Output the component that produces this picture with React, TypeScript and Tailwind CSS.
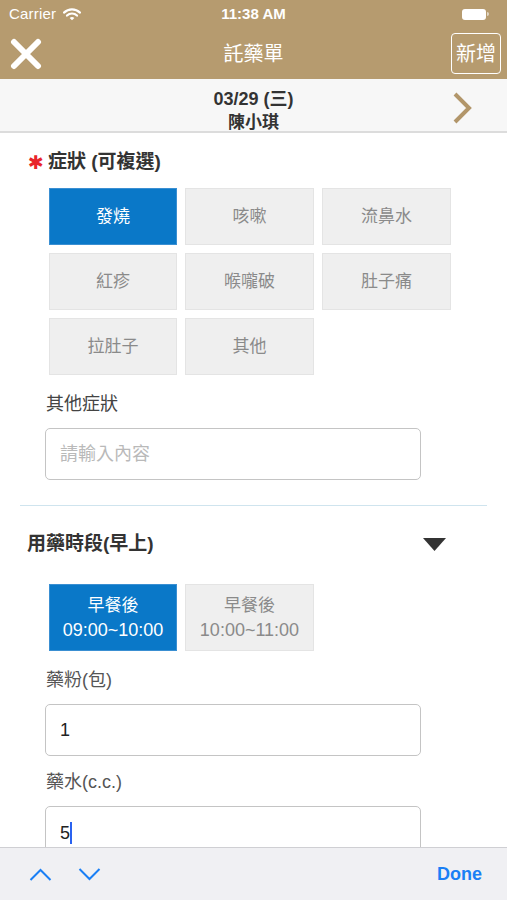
import { useState } from 'react'

const FONT = { fontFamily: '"Liberation Sans", "Noto Sans CJK TC", sans-serif' }

const SYMPTOMS = ['發燒', '咳嗽', '流鼻水', '紅疹', '喉嚨破', '肚子痛', '拉肚子', '其他']

const SLOTS = [
  { label: '早餐後', time: '09:00~10:00' },
  { label: '早餐後', time: '10:00~11:00' },
]

function StatusBar() {
  return (
    <div className="relative flex h-[28px] items-center px-[9px] text-[15px] text-white">
      <span className="tracking-[0.2px]">Carrier</span>
      <svg width="18" height="13" viewBox="0 0 18 13" className="ml-[7px]">
        <path d="M1 4.6 A11.5 11.5 0 0 1 17 4.6" stroke="white" strokeWidth="2.2" fill="none" strokeLinecap="round" />
        <path d="M4 7.6 A7 7 0 0 1 14 7.6" stroke="white" strokeWidth="2.2" fill="none" strokeLinecap="round" />
        <path d="M9 12.2 L6.6 10.1 A3.4 3.4 0 0 1 11.4 10.1 Z" fill="white" />
      </svg>
      <span className="absolute left-0 right-0 text-center font-semibold pointer-events-none">11:38 AM</span>
      <div className="ml-auto mr-[9px] flex items-center">
        <div className="h-[11px] w-[24px] rounded-[3px] bg-white" />
        <div className="ml-[1px] h-[4px] w-[2px] rounded-r-sm bg-white/60" />
      </div>
    </div>
  )
}

function NavBar() {
  return (
    <div className="relative flex h-[51px] items-center">
      <svg width="32" height="32" viewBox="0 0 32 32" className="ml-[10px]">
        <path d="M4 4 L28 28 M28 4 L4 28" stroke="white" strokeWidth="6" strokeLinecap="round" />
      </svg>
      <span className="absolute left-0 right-0 text-center text-[20px] text-white pointer-events-none">託藥單</span>
      <button className="ml-auto mr-[6px] flex h-[41px] w-[50px] items-center justify-center rounded-[4px] border border-white text-[20px] text-white">
        新增
      </button>
    </div>
  )
}

export default function App() {
  const [selected, setSelected] = useState<string[]>(['發燒'])
  const [slot, setSlot] = useState(0)

  const toggle = (s: string) =>
    setSelected((prev) => (prev.includes(s) ? prev.filter((x) => x !== s) : [...prev, s]))

  return (
    <div className="flex h-[900px] w-full flex-col overflow-hidden bg-white" style={FONT}>
      <div className="bg-[#b69b6f]">
        <StatusBar />
        <NavBar />
      </div>

      <div className="relative flex h-[54px] flex-col items-center border-b-2 border-[#dcdcdc] bg-[#f7f7f7] pt-[9px]">
        <span className="text-[18px] font-bold leading-[22px] text-[#333]">03/29 (三)</span>
        <span className="mt-[2px] text-[17px] font-bold leading-[22px] text-[#333]">陳小琪</span>
        <svg width="20" height="32" viewBox="0 0 20 32" className="absolute right-[35px] top-[13px]">
          <path d="M3 2 L17 16 L3 30" stroke="#b2966a" strokeWidth="4" fill="none" />
        </svg>
      </div>

      <div className="flex-1 overflow-hidden">
        <div className="ml-[28px] mt-[19px] flex items-center leading-[20px]">
          <span className="w-[20px] text-[19px] leading-[20px] text-[#e8242b]" style={{ fontFamily: '"DejaVu Sans", sans-serif' }}>✱</span>
          <span className="text-[19px] font-bold text-[#333]">症狀 (可複選)</span>
        </div>

        <div className="ml-[49px] mt-[16px] grid w-fit grid-cols-[128px_129px_129px] gap-[8px]">
          {SYMPTOMS.map((s) => {
            const on = selected.includes(s)
            return (
              <button
                key={s}
                onClick={() => toggle(s)}
                className={`flex h-[57px] items-center justify-center border text-[17px] ${
                  on
                    ? 'border-[#3a8fd2] bg-[#0a78c8] text-white'
                    : 'border-[#e4e4e4] bg-[#efefef] text-[#8a8a8a]'
                }`}
              >
                {s}
              </button>
            )
          })}
        </div>

        <div className="ml-[46px] mt-[19px] text-[18px] leading-[20px] text-[#444]">其他症狀</div>
        <div className="ml-[45px] mt-[14px] flex h-[52px] w-[376px] items-center rounded-[5px] border border-[#c4c4c4] px-[14px]">
          <span className="text-[18px] text-[#b9b9b9]">請輸入內容</span>
        </div>

        <div className="mx-[20px] mt-[25px] h-px bg-[#cfe4ee]" />

        <div className="ml-[27px] mr-[61px] mt-[28px] flex items-center justify-between leading-[20px]">
          <span className="text-[19px] font-bold text-[#333]">用藥時段(早上)</span>
          <svg width="23" height="13" viewBox="0 0 23 13">
            <path d="M0 0 H23 L11.5 13 Z" fill="#333" />
          </svg>
        </div>

        <div className="ml-[49px] mt-[30px] flex gap-[8px]">
          {SLOTS.map((s, i) => (
            <button
              key={s.time}
              onClick={() => setSlot(i)}
              className={`flex h-[67px] w-[128px] flex-col items-center justify-center border leading-[24px] ${
                slot === i
                  ? 'border-[#3a8fd2] bg-[#0a78c8] text-white'
                  : 'w-[129px] border-[#e4e4e4] bg-[#efefef] text-[#8a8a8a]'
              }`}
            >
              <span className="text-[17px]">{s.label}</span>
              <span className="text-[18px]">{s.time}</span>
            </button>
          ))}
        </div>

        <div className="ml-[46px] mt-[19px] text-[18px] leading-[20px] text-[#555]">藥粉(包)</div>
        <div className="ml-[45px] mt-[14px] flex h-[52px] w-[376px] items-center rounded-[5px] border border-[#c4c4c4] px-[14px]">
          <span className="text-[18px] text-[#222]">1</span>
        </div>

        <div className="ml-[46px] mt-[16px] text-[18px] leading-[20px] text-[#555]">藥水(c.c.)</div>
        <div className="ml-[45px] mt-[14px] flex h-[52px] w-[376px] items-start rounded-[5px] border border-[#c4c4c4] px-[14px] pt-[15px]">
          <span className="text-[18px] leading-[22px] text-[#222]">5</span>
          <span className="h-[22px] w-[2px] bg-[#2a62f0]" />
        </div>
      </div>

      <div className="flex h-[53px] items-center border-t border-[#cfcfd3] bg-[#f0f0f3] pl-[29px] pr-[25px]">
        <svg width="23" height="13" viewBox="0 0 23 13">
          <path d="M1.5 12 L11.5 2 L21.5 12" stroke="#1a7ff5" strokeWidth="2" fill="none" />
        </svg>
        <svg width="23" height="13" viewBox="0 0 23 13" className="ml-[26px]">
          <path d="M1.5 1 L11.5 11 L21.5 1" stroke="#1a7ff5" strokeWidth="2" fill="none" />
        </svg>
        <span className="ml-auto text-[18px] font-bold text-[#1a7ff5]">Done</span>
      </div>
    </div>
  )
}
